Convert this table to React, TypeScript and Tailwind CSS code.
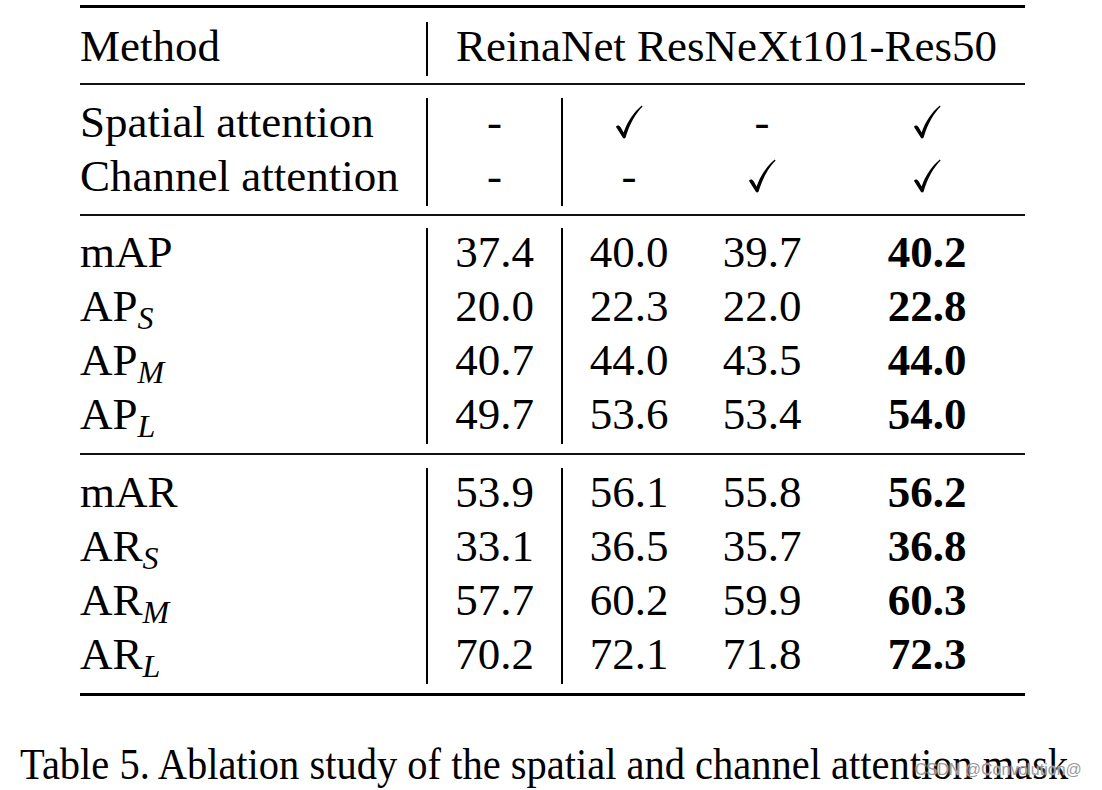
import React from "react";

const COLS = "grid grid-cols-[346px_137px_132px_134px_196px]";

const apRows: { label: string; sub?: string; vals: string[] }[] = [
  { label: "mAP", vals: ["37.4", "40.0", "39.7", "40.2"] },
  { label: "AP", sub: "S", vals: ["20.0", "22.3", "22.0", "22.8"] },
  { label: "AP", sub: "M", vals: ["40.7", "44.0", "43.5", "44.0"] },
  { label: "AP", sub: "L", vals: ["49.7", "53.6", "53.4", "54.0"] },
];

const arRows: { label: string; sub?: string; vals: string[] }[] = [
  { label: "mAR", vals: ["53.9", "56.1", "55.8", "56.2"] },
  { label: "AR", sub: "S", vals: ["33.1", "36.5", "35.7", "36.8"] },
  { label: "AR", sub: "M", vals: ["57.7", "60.2", "59.9", "60.3"] },
  { label: "AR", sub: "L", vals: ["70.2", "72.1", "71.8", "72.3"] },
];

// LaTeX-style \checkmark
function Check() {
  return (
    <svg width="28" height="34" viewBox="0 0 28 34" className="block">
      <path
        d="M1 21.5 C2.5 20 4.5 20.3 5.8 22.6 L8.6 27.6 C12.5 16.5 18.5 7.5 26.8 0.6 L27.6 1.6 C20.5 8.8 14.8 18.5 10.6 32.6 C10.3 33.6 8.4 33.8 7.9 32.8 L1.4 22.6 Z"
        fill="black"
      />
    </svg>
  );
}

function Rule({ thick = false }: { thick?: boolean }) {
  return <div className={thick ? "h-[3px] bg-black" : "h-[2px] bg-[#111]"} />;
}

function Label({ label, sub }: { label: string; sub?: string }) {
  return (
    <span>
      {label}
      {sub && <span className="italic text-[32px] align-[-8px]">{sub}</span>}
    </span>
  );
}

function DataRow({ label, sub, vals }: { label: string; sub?: string; vals: string[] }) {
  return (
    <div className={COLS}>
      <div className="h-[54px] leading-[48px]">
        <Label label={label} sub={sub} />
      </div>
      {vals.map((v, i) => (
        <div
          key={i}
          className={
            "h-[54px] leading-[48px] text-center " +
            (i === 0 ? "border-x-2 border-black " : "") +
            (i === 3 ? "font-bold" : "")
          }
        >
          {v}
        </div>
      ))}
    </div>
  );
}

function MarkCell({ on, first }: { on: boolean; first?: boolean }) {
  return (
    <div
      className={
        "h-[54px] leading-[48px] flex justify-center items-start " +
        (first ? "border-x-2 border-black" : "")
      }
    >
      {on ? (
        <span className="block mt-[7px]">
          <Check />
        </span>
      ) : (
        <span>-</span>
      )}
    </div>
  );
}

export default function App() {
  const attn = [
    { label: "Spatial attention", marks: [false, true, false, true] },
    { label: "Channel attention", marks: [false, false, true, true] },
  ];

  return (
    <div className="relative w-[1102px] h-[790px] overflow-hidden bg-white text-black font-[family-name:Liberation_Serif,Times_New_Roman,serif] text-[45px]">
      <div className="ml-[80px] w-[945px] pt-[5px]">
        <Rule thick />

        {/* header */}
        <div className="pt-[14px] pb-[7px]">
          <div className="grid grid-cols-[346px_1fr]">
            <div className="h-[54px] leading-[48px]">Method</div>
            <div className="h-[54px] leading-[48px] text-center border-l-2 border-black">
              ReinaNet ResNeXt101-Res50
            </div>
          </div>
        </div>
        <Rule />

        {/* attention switches */}
        <div className="pt-[13px] pb-[8px]">
          {attn.map((r) => (
            <div key={r.label} className={COLS}>
              <div className="h-[54px] leading-[48px]">{r.label}</div>
              {r.marks.map((m, i) => (
                <MarkCell key={i} on={m} first={i === 0} />
              ))}
            </div>
          ))}
        </div>
        <Rule />

        <div className="pt-[12px] pb-[9px]">
          {apRows.map((r, i) => (
            <DataRow key={i} {...r} />
          ))}
        </div>
        <Rule />

        <div className="pt-[13px] pb-[9px]">
          {arRows.map((r, i) => (
            <DataRow key={i} {...r} />
          ))}
        </div>
        <Rule thick />
      </div>

      {/* caption is a bit condensed in the source scan */}
      <p className="mt-[45px] ml-[20px] text-[44px] leading-[48px] whitespace-nowrap origin-left scale-x-[0.92]">
        Table 5. Ablation study of the spatial and channel attention mask
      </p>

      <span className="absolute left-[915px] top-[761px] text-[16px] leading-[18px] text-[#9a9a9a] font-[family-name:Liberation_Sans,Arial,sans-serif] [text-shadow:0_0_2px_#fff]">
        CSDN @Convolution@
      </span>
    </div>
  );
}
